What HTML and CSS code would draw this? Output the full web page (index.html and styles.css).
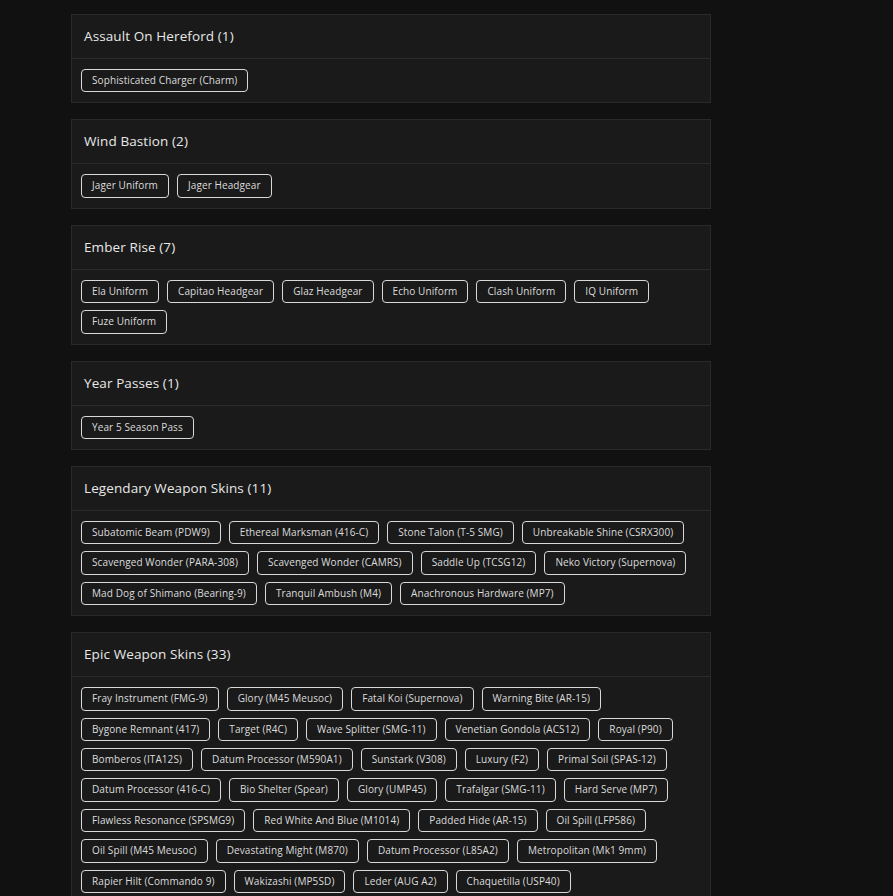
FILE: index.html
```html
<!DOCTYPE html>
<html>
<head>
  <title>Inventory</title>
  <link rel="stylesheet" href="styles.css">
</head>
<body>
  <div class="page">

    <div class="card">
      <div class="card-header">Assault On Hereford (1)</div>
      <div class="card-body">
        <span class="tag">Sophisticated Charger (Charm)</span>
      </div>
    </div>

    <div class="card">
      <div class="card-header">Wind Bastion (2)</div>
      <div class="card-body">
        <span class="tag">Jager Uniform</span>
        <span class="tag">Jager Headgear</span>
      </div>
    </div>

    <div class="card">
      <div class="card-header">Ember Rise (7)</div>
      <div class="card-body">
        <span class="tag">Ela Uniform</span>
        <span class="tag">Capitao Headgear</span>
        <span class="tag">Glaz Headgear</span>
        <span class="tag">Echo Uniform</span>
        <span class="tag">Clash Uniform</span>
        <span class="tag">IQ Uniform</span>
        <span class="tag">Fuze Uniform</span>
      </div>
    </div>

    <div class="card">
      <div class="card-header">Year Passes (1)</div>
      <div class="card-body">
        <span class="tag">Year 5 Season Pass</span>
      </div>
    </div>

    <div class="card">
      <div class="card-header">Legendary Weapon Skins (11)</div>
      <div class="card-body">
        <span class="tag">Subatomic Beam (PDW9)</span>
        <span class="tag">Ethereal Marksman (416-C)</span>
        <span class="tag">Stone Talon (T-5 SMG)</span>
        <span class="tag">Unbreakable Shine (CSRX300)</span>
        <span class="tag">Scavenged Wonder (PARA-308)</span>
        <span class="tag">Scavenged Wonder (CAMRS)</span>
        <span class="tag">Saddle Up (TCSG12)</span>
        <span class="tag">Neko Victory (Supernova)</span>
        <span class="tag">Mad Dog of Shimano (Bearing-9)</span>
        <span class="tag">Tranquil Ambush (M4)</span>
        <span class="tag">Anachronous Hardware (MP7)</span>
      </div>
    </div>

    <div class="card">
      <div class="card-header">Epic Weapon Skins (33)</div>
      <div class="card-body">
        <span class="tag">Fray Instrument (FMG-9)</span>
        <span class="tag">Glory (M45 Meusoc)</span>
        <span class="tag">Fatal Koi (Supernova)</span>
        <span class="tag">Warning Bite (AR-15)</span>
        <span class="tag">Bygone Remnant (417)</span>
        <span class="tag">Target (R4C)</span>
        <span class="tag">Wave Splitter (SMG-11)</span>
        <span class="tag">Venetian Gondola (ACS12)</span>
        <span class="tag">Royal (P90)</span>
        <span class="tag">Bomberos (ITA12S)</span>
        <span class="tag">Datum Processor (M590A1)</span>
        <span class="tag">Sunstark (V308)</span>
        <span class="tag">Luxury (F2)</span>
        <span class="tag">Primal Soil (SPAS-12)</span>
        <span class="tag">Datum Processor (416-C)</span>
        <span class="tag">Bio Shelter (Spear)</span>
        <span class="tag">Glory (UMP45)</span>
        <span class="tag">Trafalgar (SMG-11)</span>
        <span class="tag">Hard Serve (MP7)</span>
        <span class="tag">Flawless Resonance (SPSMG9)</span>
        <span class="tag">Red White And Blue (M1014)</span>
        <span class="tag">Padded Hide (AR-15)</span>
        <span class="tag">Oil Spill (LFP586)</span>
        <span class="tag">Oil Spill (M45 Meusoc)</span>
        <span class="tag">Devastating Might (M870)</span>
        <span class="tag">Datum Processor (L85A2)</span>
        <span class="tag">Metropolitan (Mk1 9mm)</span>
        <span class="tag">Rapier Hilt (Commando 9)</span>
        <span class="tag">Wakizashi (MP5SD)</span>
        <span class="tag">Leder (AUG A2)</span>
        <span class="tag">Chaquetilla (USP40)</span>
      </div>
    </div>

  </div>
</body>
</html>
```

FILE: styles.css
```css
body {
  margin: 0;
  background-color: #111111;
  color: #e8e8e8;
  font-family: "Open Sans", "Noto Sans", sans-serif;
}

.page {
  width: 640px;
  padding: 14px 0 0 71px;
}

.card {
  background-color: #1a1a1a;
  border: 1px solid #2a2a2a;
  margin-bottom: 16px;
}

.card-header {
  padding: 12px 12px;
  line-height: 19px;
  font-size: 13.5px;
  font-weight: 500;
  letter-spacing: 0.1px;
  border-bottom: 1px solid #2a2a2a;
}

.card-body {
  display: flex;
  flex-wrap: wrap;
  gap: 7px 8px;
  padding: 10px 9px;
}

.tag {
  display: inline-block;
  padding: 3px 10px;
  line-height: 15.4px;
  font-size: 10px;
  letter-spacing: 0.1px;
  color: #dcdcdc;
  border: 1px solid #d8d8d8;
  border-radius: 4px;
}
```
